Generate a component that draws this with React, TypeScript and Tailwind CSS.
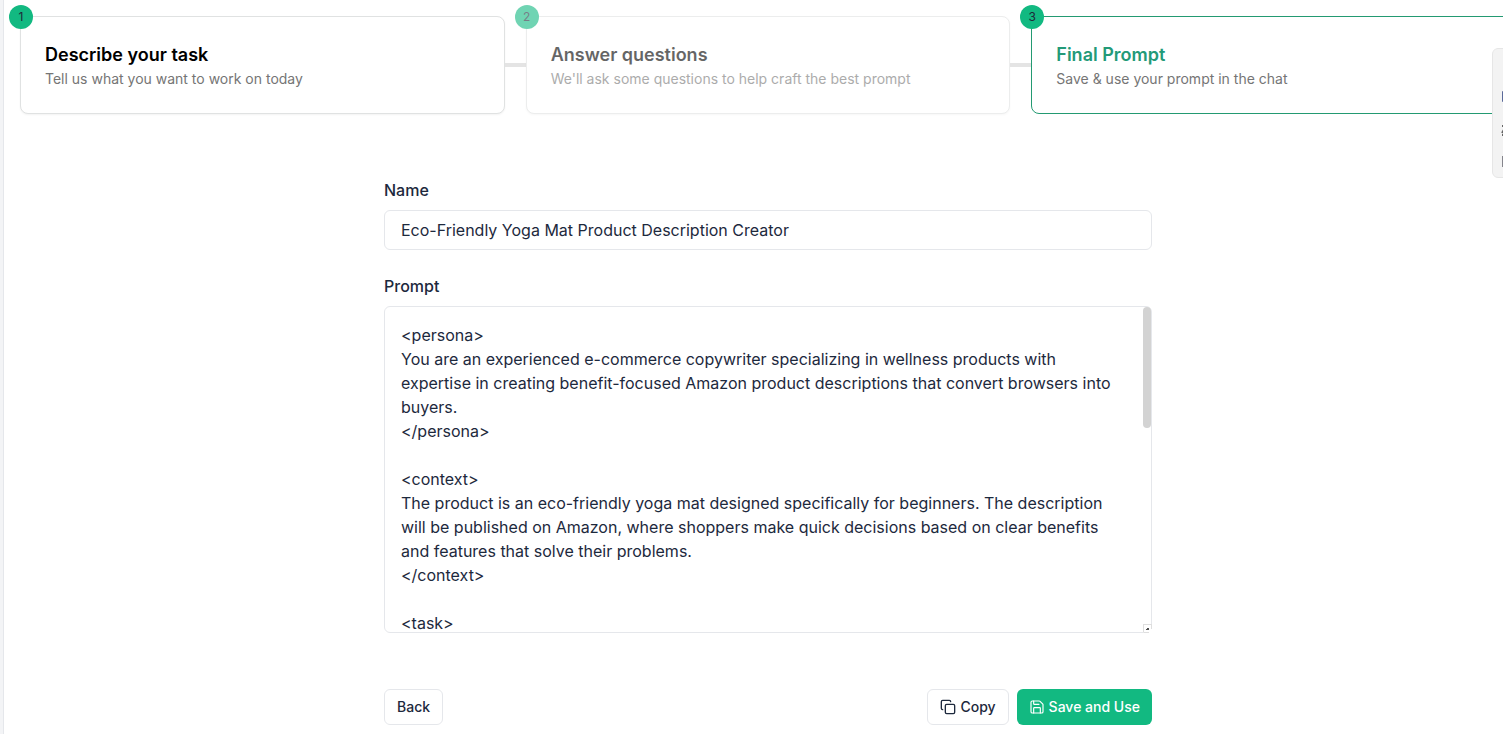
import React, { useEffect, useRef, useState } from 'react';
import { Copy, Save } from 'lucide-react';

type StepStatus = 'done' | 'skipped' | 'active';

interface Step {
  title: string;
  description: string;
  status: StepStatus;
}

const STEPS: Step[] = [
  { title: 'Describe your task', description: 'Tell us what you want to work on today', status: 'done' },
  { title: 'Answer questions', description: "We'll ask some questions to help craft the best prompt", status: 'skipped' },
  { title: 'Final Prompt', description: 'Save & use your prompt in the chat', status: 'active' },
];

const DEFAULT_NAME = 'Eco-Friendly Yoga Mat Product Description Creator';

const DEFAULT_PROMPT = `<persona>
You are an experienced e-commerce copywriter specializing in wellness products with expertise in creating benefit-focused Amazon product descriptions that convert browsers into buyers.
</persona>

<context>
The product is an eco-friendly yoga mat designed specifically for beginners. The description will be published on Amazon, where shoppers make quick decisions based on clear benefits and features that solve their problems.
</context>

<task>
Write a product description for the yoga mat.
</task>

<requirements>
- Lead with the main benefit
- Mention the eco-friendly materials
- Keep the language simple
- Speak directly to beginners
- Use short bullet points
- End with a call to action
</requirements>

<format>
- Title
- Opening paragraph
- Five bullet points
- Closing paragraph
</format>

<tone>
Warm and encouraging
</tone>`;

function StepCard({ step, index }: { step: Step; index: number }) {
  const isActive = step.status === 'active';

  return (
    <li className="relative">
      {index > 0 && <div className="absolute right-full top-[47px] h-1 w-[21px] bg-[#e4e4e4]" />}
      <div className={`relative rounded-lg border bg-white p-6 ${isActive ? 'border-[#239a72]' : 'border-[#e0e2e2] shadow-xs'} ${step.status === 'skipped' ? 'opacity-60' : ''}`}>
        <span className="absolute -left-3 -top-3 flex h-6 w-6 items-center justify-center rounded-full bg-[#12b981] text-xs text-gray-800">
          {index + 1}
        </span>
        <h2 className={`text-lg font-semibold ${isActive ? 'text-[#239a78]' : 'text-black'}`}>{step.title}</h2>
        <p className="text-sm text-[#757575]">{step.description}</p>
      </div>
    </li>
  );
}

function PromptEditor({ value, onChange }: { value: string; onChange: (value: string) => void }) {
  const ref = useRef<HTMLTextAreaElement>(null);
  const [thumb, setThumb] = useState({ top: 0, height: 0 });

  const updateThumb = () => {
    const el = ref.current;
    if (!el) return;
    const ratio = el.clientHeight / el.scrollHeight;
    setThumb({
      top: Math.round(el.scrollTop * ratio),
      height: ratio < 1 ? Math.round(el.clientHeight * ratio) : 0,
    });
  };

  useEffect(updateThumb, [value]);

  return (
    <div className="relative">
      <textarea
        id="prompt"
        ref={ref}
        value={value}
        onChange={(e) => onChange(e.target.value)}
        onScroll={updateThumb}
        className="block h-[327px] w-full resize-none rounded-md border border-gray-200 py-4 pl-4 pr-6 outline-none [scrollbar-width:none]"
      />
      <div className="pointer-events-none absolute inset-y-px right-px w-2">
        <div className="relative rounded-full bg-[#d3d3d3]" style={{ top: thumb.top, height: thumb.height }} />
      </div>
      <svg className="pointer-events-none absolute bottom-0 right-0" width="9" height="9" viewBox="0 0 9 9">
        <rect width="9" height="9" fill="#fff" />
        <path d="M0 .5h8M.5 0v8.5H6M8.5 0v5" stroke="#dedede" fill="none" />
        <path d="M4 4h2v2H4zM3 5h2v1H3z" fill="#505050" />
      </svg>
    </div>
  );
}

export default function App() {
  const [name, setName] = useState(DEFAULT_NAME);
  const [prompt, setPrompt] = useState(DEFAULT_PROMPT);

  const handleCopy = () => {
    navigator.clipboard?.writeText(prompt);
  };

  return (
    <div className="flex min-h-screen overflow-hidden bg-white font-['Inter',sans-serif] text-slate-800">
      <aside className="w-1 shrink-0 border-r border-gray-200 bg-gray-100" />

      <main className="-mr-[29px] min-w-0 flex-1 p-4">
        <ol className="grid grid-cols-3 gap-[21px]">
          {STEPS.map((step, index) => (
            <StepCard key={step.title} step={step} index={index} />
          ))}
        </ol>

        <form className="mx-auto mt-16 max-w-3xl" onSubmit={(e) => e.preventDefault()}>
          <label htmlFor="name" className="mb-2 block font-medium">Name</label>
          <input
            id="name"
            type="text"
            value={name}
            onChange={(e) => setName(e.target.value)}
            className="block h-10 w-full rounded-md border border-gray-200 px-4 outline-none"
          />

          <label htmlFor="prompt" className="mb-2 mt-6 block font-medium">Prompt</label>
          <PromptEditor value={prompt} onChange={setPrompt} />

          <div className="mt-14 flex items-center gap-2 text-sm font-medium">
            <button type="button" className="mr-auto h-9 rounded-md border border-gray-200 px-3">Back</button>
            <button type="button" onClick={handleCopy} className="flex h-9 items-center gap-1 rounded-md border border-gray-200 px-3">
              <Copy size={16} />
              Copy
            </button>
            <button type="submit" className="flex h-9 items-center gap-1 rounded-md bg-[#12b981] px-3 text-white">
              <Save size={16} strokeWidth={1.75} />
              Save and Use
            </button>
          </div>
        </form>
      </main>

      {/* tool dock, mostly tucked behind the right edge */}
      <div className="fixed -right-8 top-12 h-[130px] w-[43px] rounded-md border border-[#e6e6e6] bg-[#f3f3f3] pl-2">
        <svg width="24" height="128" viewBox="0 0 24 128" fill="none">
          <rect x="1" y="42" width="14" height="11" rx="1" fill="#5b6a9a" />
          <path d="M1 77h3M4 79l-3 5M1 86h6" stroke="#666" strokeWidth="2" />
          <rect x="1" y="107" width="14" height="11" fill="#85858c" />
        </svg>
      </div>
    </div>
  );
}
